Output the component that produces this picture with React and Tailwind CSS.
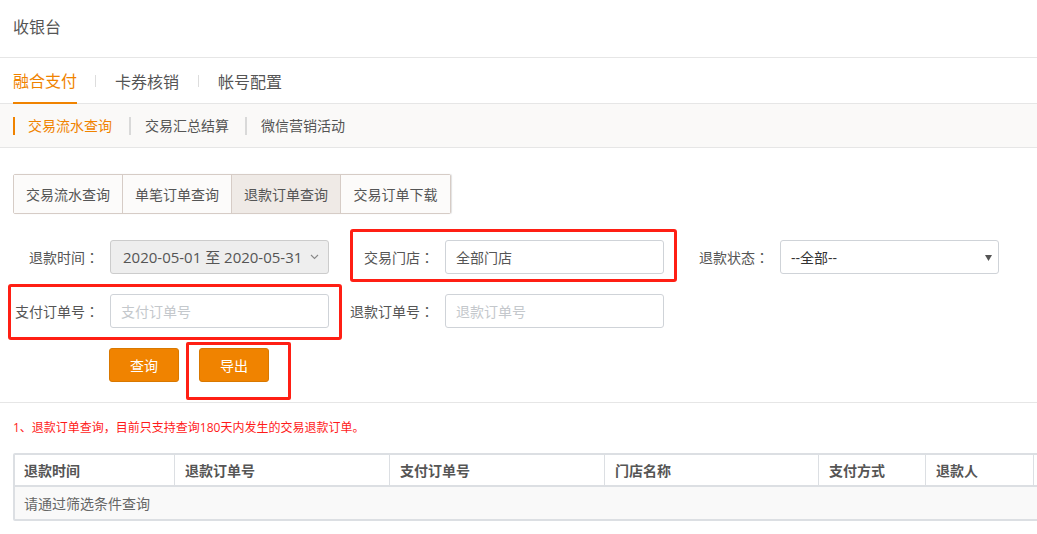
export default function App() {
  const inputCls = "w-[219px] h-[34px] border border-[#cfd3d8] rounded-[3px] bg-white flex items-center px-[10px] text-[14px]";
  const Label = ({ children }) => (
    <div className="w-[86px] text-right text-[14px] text-[#555] whitespace-nowrap">
      {children}
      <span className="font-[family-name:'Noto_Sans_CJK_TC',sans-serif]">：</span>
    </div>
  );
  return (
    <div className="relative w-[1037px] h-[534px] overflow-hidden bg-white text-[#555] font-[family-name:'Open_Sans','Noto_Sans_CJK_SC',sans-serif]">
      {/* header */}
      <div className="h-[58px] flex items-center px-[13px] pb-[3px] border-b border-[#e6e6e6] text-[16px] text-[#555]">收银台</div>

      {/* main tabs */}
      <div className="h-[46px] flex items-stretch px-[13px] border-b border-[#e6e6e6] text-[16px]">
        <div className="flex items-center text-[#f08300] border-b-2 border-[#f08300] -mb-px pt-[2px]">融合支付</div>
        <div className="flex items-center pl-[18px] pr-[19px]"><div className="w-px h-[12px] bg-[#dddddd]" /></div>
        <div className="flex items-center text-[#555] pt-[2px]">卡券核销</div>
        <div className="flex items-center px-[19px]"><div className="w-px h-[12px] bg-[#dddddd]" /></div>
        <div className="flex items-center text-[#555] pt-[2px]">帐号配置</div>
      </div>

      {/* sub nav */}
      <div className="h-[44px] flex items-center pl-[13px] bg-[#faf9f8] border-b border-[#e6e6e6] text-[14px]">
        <div className="w-[2px] h-[18px] bg-[#f08300]" />
        <div className="ml-[13px] text-[#f08300]">交易流水查询</div>
        <div className="ml-[17px] w-[2px] h-[18px] bg-[#d9d9d9]" />
        <div className="ml-[14px] text-[#555]">交易汇总结算</div>
        <div className="ml-[16px] w-[2px] h-[18px] bg-[#d9d9d9]" />
        <div className="ml-[14px] text-[#555]">微信营销活动</div>
      </div>

      {/* segmented tabs */}
      <div className="mt-[26px] ml-[13px] flex w-fit h-[40px] border border-[#d6ccc6] rounded-[2px] text-[14px] text-[#555] shadow-[1px_0_1px_rgba(0,0,0,0.12)]">
        <div className="w-[109px] flex items-center justify-center bg-[#fcfbfa] border-r border-[#d6ccc6]">交易流水查询</div>
        <div className="w-[109px] flex items-center justify-center bg-[#fcfbfa] border-r border-[#d6ccc6]">单笔订单查询</div>
        <div className="w-[109px] flex items-center justify-center bg-[#efeae6] border-r border-[#d6ccc6]">退款订单查询</div>
        <div className="w-[109px] flex items-center justify-center bg-[#fcfbfa]">交易订单下载</div>
      </div>

      {/* form */}
      <div className="mt-[26px] ml-[13px] flex flex-col gap-[20px]">
        <div className="flex">
          <div className="w-[335px] flex items-center gap-[11px]">
            <Label>退款时间</Label>
            <div className="w-[219px] h-[34px] border border-[#cccccc] rounded-[3px] bg-[#eeeeee] flex items-center pl-[12px] pr-[9px] text-[15px] text-[#555]">
              <span className="flex-1">2020-05-01 至 2020-05-31</span>
              <svg width="9" height="6" viewBox="0 0 9 6"><path d="M1 1l3.5 3.5L8 1" fill="none" stroke="#888" strokeWidth="1.1" /></svg>
            </div>
          </div>
          <div className="w-[335px] flex items-center gap-[11px]">
            <Label>交易门店</Label>
            <div className={inputCls + " text-[#555]"}>全部门店</div>
          </div>
          <div className="w-[335px] flex items-center gap-[11px]">
            <Label>退款状态</Label>
            <div className={inputCls + " text-[#333] justify-between pr-[6px]"}>
              <span>--全部--</span>
              <svg width="7" height="7" viewBox="0 0 7 7"><path d="M0 1h7L3.5 7z" fill="#555" /></svg>
            </div>
          </div>
        </div>
        <div className="flex">
          <div className="w-[335px] flex items-center gap-[11px]">
            <Label>支付订单号</Label>
            <div className={inputCls + " text-[#c4c8cc]"}>支付订单号</div>
          </div>
          <div className="w-[335px] flex items-center gap-[11px]">
            <Label>退款订单号</Label>
            <div className={inputCls + " text-[#c4c8cc]"}>退款订单号</div>
          </div>
        </div>
        <div className="flex gap-[20px] pl-[96px]">
          <button className="w-[70px] h-[34px] bg-[#f08300] border border-[#d97800] rounded-[3px] text-white text-[14px]">查询</button>
          <button className="w-[70px] h-[34px] bg-[#f08300] border border-[#d97800] rounded-[3px] text-white text-[14px]">导出</button>
        </div>
      </div>

      <div className="mt-[20px] border-t border-[#e6e6e6]" />

      <div className="mt-[16px] ml-[13px] text-[12px] leading-[18px] text-[#ff1a1a]">1、退款订单查询，目前只支持查询180天内发生的交易退款订单。</div>

      {/* table */}
      <div className="mt-[16px] ml-[13px] w-[1120px] border-2 border-[#dcdfe3] rounded-[2px] text-[14px]">
        <div className="flex h-[32px] border-b-2 border-[#dcdfe3] bg-white font-bold text-[#555]">
          <div className="w-[160px] flex items-center pl-[9px] border-r border-[#dcdfe3]">退款时间</div>
          <div className="w-[215px] flex items-center pl-[10px] border-r border-[#dcdfe3]">退款订单号</div>
          <div className="w-[215px] flex items-center pl-[10px] border-r border-[#dcdfe3]">支付订单号</div>
          <div className="w-[214px] flex items-center pl-[10px] border-r border-[#dcdfe3]">门店名称</div>
          <div className="w-[107px] flex items-center pl-[10px] border-r border-[#dcdfe3]">支付方式</div>
          <div className="w-[108px] flex items-center pl-[10px] border-r border-[#dcdfe3]">退款人</div>
          <div className="flex-1" />
        </div>
        <div className="h-[32px] flex items-center pl-[9px] bg-[#f9f9f9] text-[#666]">请通过筛选条件查询</div>
      </div>

      {/* red annotation boxes */}
      <div className="absolute left-[350px] top-[229px] w-[327px] h-[53px] border-[3px] border-[#ff1f14] rounded-[3px]" />
      <div className="absolute left-[8px] top-[284px] w-[334px] h-[56px] border-[3px] border-[#ff1f14] rounded-[3px]" />
      <div className="absolute left-[186px] top-[342px] w-[105px] h-[58px] border-[3px] border-[#ff1f14] rounded-[2px]" />
    </div>
  );
}
